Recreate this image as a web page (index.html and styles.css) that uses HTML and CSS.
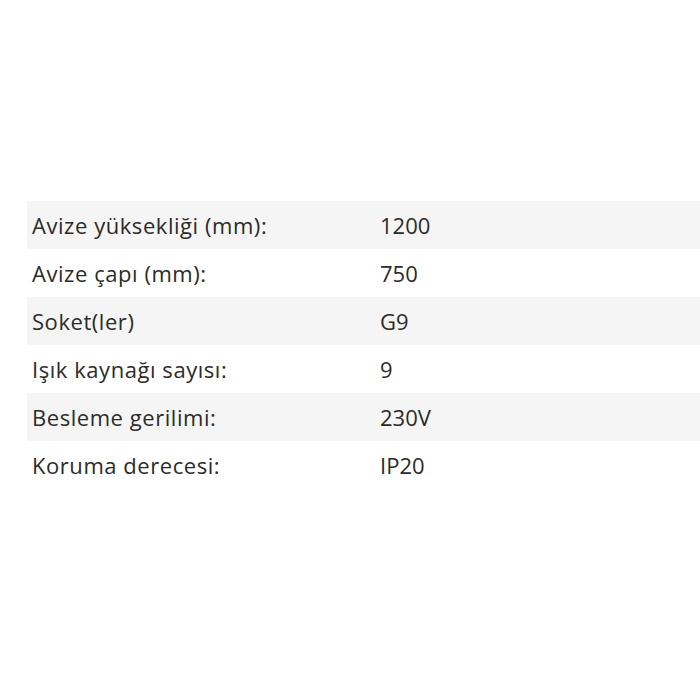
FILE: index.html
```html
<!DOCTYPE html>
<html lang="tr">
<head>
<meta charset="utf-8">
<link rel="stylesheet" href="styles.css">
</head>
<body>
<div class="specs">
  <div class="row alt"><div class="label">Avize yüksekliği (mm):</div><div class="value">1200</div></div>
  <div class="row"><div class="label">Avize çapı (mm):</div><div class="value">750</div></div>
  <div class="row alt"><div class="label">Soket(ler)</div><div class="value">G9</div></div>
  <div class="row"><div class="label">Işık kaynağı sayısı:</div><div class="value">9</div></div>
  <div class="row alt"><div class="label">Besleme gerilimi:</div><div class="value">230V</div></div>
  <div class="row"><div class="label">Koruma derecesi:</div><div class="value">IP20</div></div>
</div>
</body>
</html>
```
FILE: styles.css
```css
html, body {
  margin: 0;
  padding: 0;
  background: #fff;
}
body {
  font-family: "Open Sans", "Liberation Sans", sans-serif;
  color: #2b2b2b;
  font-size: 22px;
  padding-top: 201px;
  padding-left: 27px;
}
.specs {
  display: flex;
  flex-direction: column;
}
.row {
  display: grid;
  grid-template-columns: 348px 1fr;
  height: 48px;
  align-items: center;
}
.row.alt {
  background: #f5f5f5;
}
.label {
  padding-left: 5px;
  letter-spacing: 0.55px;
}
.value {
  padding-left: 5px;
}
```
